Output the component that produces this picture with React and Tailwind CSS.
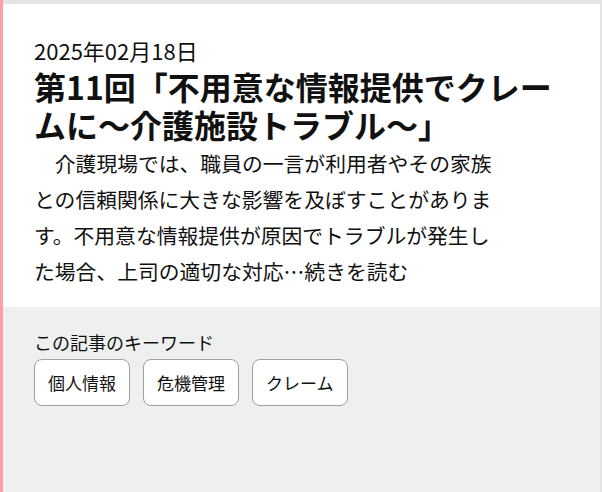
const tags = ["個人情報", "危機管理", "クレーム"];

export default function App() {
  return (
    <div
      className="flex min-h-screen border-l-[3px] border-[#fba0a8] bg-[#e3e4e4] text-[#111]"
      style={{ fontFamily: '"Noto Sans CJK JP", "Noto Sans", sans-serif' }}
    >
      <div className="flex flex-1 flex-col mt-[4px] mr-[2px]">
        {/* 記事カード */}
        <div className="bg-white pl-[31px] pr-[20px] pt-[32px] pb-[18px]">
          <p className="text-[22px] leading-[28px]">2025年02月18日</p>
          <h1 className="mt-[3px] text-[32px] font-bold leading-[38px]">
            第11回「不用意な情報提供でクレームに～介護施設トラブル～」
          </h1>
          <p className="mt-[2px] max-w-[470px] indent-[1em] text-[20.8px] leading-[36px]">
            介護現場では、職員の一言が利用者やその家族との信頼関係に大きな影響を及ぼすことがあります。不用意な情報提供が原因でトラブルが発生した場合、上司の適切な対応…続きを読む
          </p>
        </div>

        {/* キーワード */}
        <div className="flex-1 bg-[#eef0ef] pl-[31px] pt-[23px]">
          <p className="text-[18px] leading-[24px]">この記事のキーワード</p>
          <div className="mt-[5px] flex gap-[13px]">
            {tags.map((t) => (
              <span
                key={t}
                className="flex h-[47px] items-center rounded-[8px] border border-[#a0a0a0] bg-white px-[13px] text-[17px]"
              >
                {t}
              </span>
            ))}
          </div>
        </div>
      </div>
    </div>
  );
}
